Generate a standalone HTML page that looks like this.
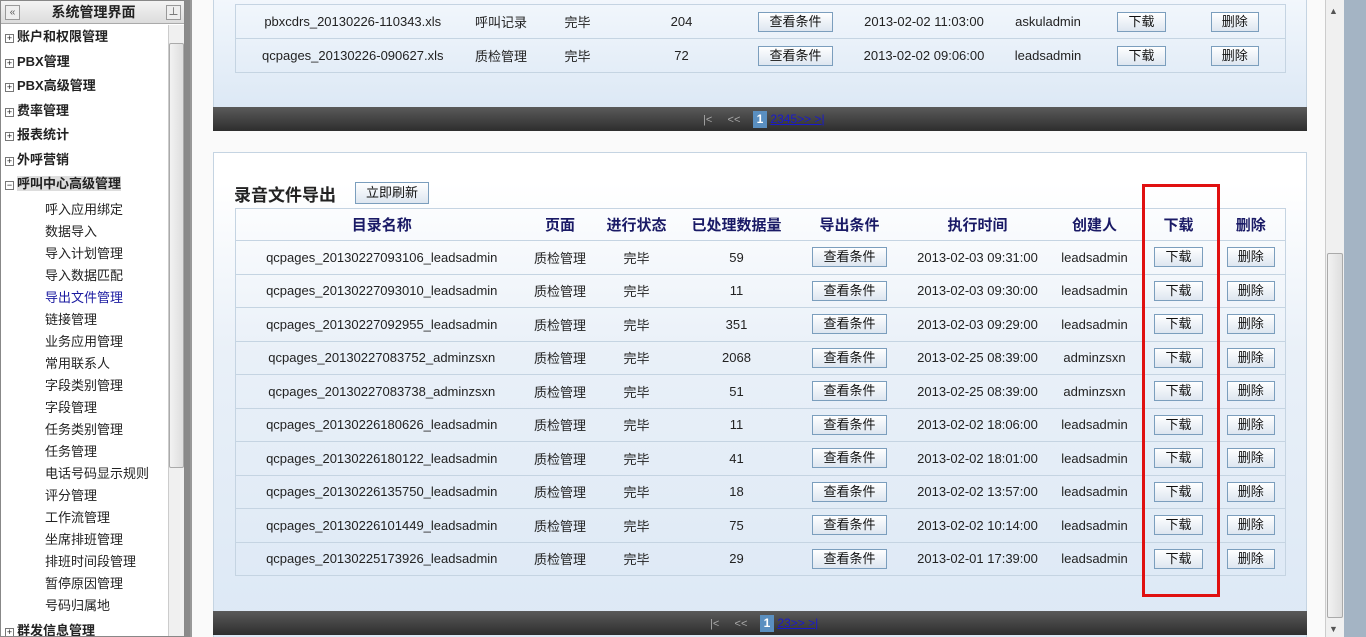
<!DOCTYPE html>
<html><head><meta charset="utf-8"><style>
*{margin:0;padding:0;box-sizing:border-box}
html,body{width:1366px;height:637px;overflow:hidden}
body{background:#8a8a8a;font-family:"Liberation Sans","Noto Sans CJK SC",sans-serif;font-size:13px;color:#222;position:relative}
.a{position:absolute}
#side{left:0;top:0;width:185px;height:637px;background:#fff;border:1px solid #888;overflow:hidden}
#shead{left:0;top:0;width:185px;height:23px;background:linear-gradient(#f4f4f4,#dcdcdc);border-bottom:1px solid #aaa;text-align:center;font-weight:bold;font-size:14px;line-height:23px}
.sbtn{top:4px;width:15px;height:15px;border:1px solid #999;background:#eee;font-size:10px;line-height:13px;text-align:center;color:#555}
.t1{left:4px;font-weight:bold;font-size:13px;line-height:18px;white-space:nowrap}
.t1 b{display:inline-block;width:9px;height:9px;border:1px solid #777;font-size:9px;line-height:7px;text-align:center;font-weight:normal;margin-right:3px;vertical-align:0px}
.t2{left:44px;font-size:13px;line-height:18px;white-space:nowrap}
.sbar{background:#f0f0f0;border-left:1px solid #ccc}
.thumb{background:linear-gradient(90deg,#f2f2f2,#dedede);border:1px solid #aaa;border-radius:2px}
#main{left:190px;top:0;width:1135px;height:637px;background:#fafafa;border-left:2px solid #999;overflow:hidden}
.panel{background:linear-gradient(#f2f7fc,#dce8f5);border:1px solid #c5d4e2}
.bar{background:linear-gradient(#5a5a5a,#2e2e2e);color:#aaa;font-size:11px}
.btn{display:inline-block;border:1px solid #7b9ebd;background:linear-gradient(#fff,#dde6f0);font-size:13px;line-height:18px;padding:0 10px;color:#111}
table{border-collapse:collapse;position:absolute;table-layout:fixed;border:1px solid #c5d4e2}
td,th{border-top:1px solid #c5d4e2;border-bottom:1px solid #c5d4e2;text-align:center;white-space:nowrap;font-size:13px;padding:0}
th{color:#1a1a66;font-size:15px;font-weight:bold}
.pg1{display:inline-block;background:#5a8fc0;color:#fff;font-weight:bold;padding:0 4px;font-size:12px;line-height:17px}
.lnk{color:#1a1acc;text-decoration:underline;font-size:12px}
</style></head><body>
<div id="side" class="a">
<div id="shead" class="a">系统管理界面</div>
<div class="a sbtn" style="left:4px">«</div>
<div class="a sbtn" style="left:165px">⊥</div>
<div class="a t1" style="top:27px"><b>+</b>账户和权限管理</div>
<div class="a t1" style="top:52px"><b>+</b>PBX管理</div>
<div class="a t1" style="top:76px"><b>+</b>PBX高级管理</div>
<div class="a t1" style="top:101px"><b>+</b>费率管理</div>
<div class="a t1" style="top:125px"><b>+</b>报表统计</div>
<div class="a t1" style="top:150px"><b>+</b>外呼营销</div>
<div class="a t1" style="top:174px"><b>−</b><span style="background:#ddd">呼叫中心高级管理</span></div>
<div class="a t2" style="top:200px">呼入应用绑定</div>
<div class="a t2" style="top:222px">数据导入</div>
<div class="a t2" style="top:244px">导入计划管理</div>
<div class="a t2" style="top:266px">导入数据匹配</div>
<div class="a t2" style="top:288px;color:#1a1aa0">导出文件管理</div>
<div class="a t2" style="top:310px">链接管理</div>
<div class="a t2" style="top:332px">业务应用管理</div>
<div class="a t2" style="top:354px">常用联系人</div>
<div class="a t2" style="top:376px">字段类别管理</div>
<div class="a t2" style="top:398px">字段管理</div>
<div class="a t2" style="top:420px">任务类别管理</div>
<div class="a t2" style="top:442px">任务管理</div>
<div class="a t2" style="top:464px">电话号码显示规则</div>
<div class="a t2" style="top:486px">评分管理</div>
<div class="a t2" style="top:508px">工作流管理</div>
<div class="a t2" style="top:530px">坐席排班管理</div>
<div class="a t2" style="top:552px">排班时间段管理</div>
<div class="a t2" style="top:574px">暂停原因管理</div>
<div class="a t2" style="top:596px">号码归属地</div>
<div class="a t1" style="top:621px"><b>+</b>群发信息管理</div>
<div class="a sbar" style="left:167px;top:24px;width:17px;height:612px"></div>
<div class="a thumb" style="left:168px;top:42px;width:15px;height:425px"></div>
</div>

<div id="main" class="a">
<div class="a panel" style="left:21px;top:-2px;width:1094px;height:112px"></div>
<table style="left:43px;top:4px;width:1050px">
<colgroup><col style="width:234px"><col style="width:63px"><col style="width:90px"><col style="width:118px"><col style="width:110px"><col style="width:147px"><col style="width:101px"><col style="width:86px"><col style="width:101px"></colgroup>
<tr style="height:34px"><td>pbxcdrs_20130226-110343.xls</td><td>呼叫记录</td><td>完毕</td><td>204</td><td><span class="btn">查看条件</span></td><td>2013-02-02 11:03:00</td><td>askuladmin</td><td><span class="btn">下载</span></td><td><span class="btn">删除</span></td></tr>
<tr style="height:34px"><td>qcpages_20130226-090627.xls</td><td>质检管理</td><td>完毕</td><td>72</td><td><span class="btn">查看条件</span></td><td>2013-02-02 09:06:00</td><td>leadsadmin</td><td><span class="btn">下载</span></td><td><span class="btn">删除</span></td></tr>
</table>
<div class="a bar" style="left:21px;top:107px;width:1094px;height:24px;line-height:24px;padding-left:490px">|&lt;&nbsp;&nbsp;&nbsp;&nbsp;&nbsp;&lt;&lt;&nbsp;&nbsp;&nbsp;&nbsp;<span class="pg1">1</span> <span class="lnk">2345&gt;&gt; &gt;|</span></div>

<div class="a panel" style="left:21px;top:152px;width:1094px;height:490px;background:linear-gradient(#fff 0,#fff 30px,#e9f0f8 200px,#dce8f5)"></div>
<div class="a" style="left:42px;top:181px;font-size:17px;font-weight:bold">录音文件导出</div>
<div class="a btn" style="left:163px;top:182px;line-height:20px">立即刷新</div>
<table style="left:43px;top:208px;width:1050px">
<colgroup><col style="width:292px"><col style="width:65px"><col style="width:88px"><col style="width:112px"><col style="width:114px"><col style="width:142px"><col style="width:92px"><col style="width:76px"><col style="width:69px"></colgroup>
<tr style="height:32px"><th>目录名称</th><th>页面</th><th>进行状态</th><th>已处理数据量</th><th>导出条件</th><th>执行时间</th><th>创建人</th><th>下载</th><th>删除</th></tr>
<tr style="height:33.5px"><td>qcpages_20130227093106_leadsadmin</td><td>质检管理</td><td>完毕</td><td>59</td><td><span class="btn">查看条件</span></td><td>2013-02-03 09:31:00</td><td>leadsadmin</td><td><span class="btn">下载</span></td><td><span class="btn">删除</span></td></tr>
<tr style="height:33.5px"><td>qcpages_20130227093010_leadsadmin</td><td>质检管理</td><td>完毕</td><td>11</td><td><span class="btn">查看条件</span></td><td>2013-02-03 09:30:00</td><td>leadsadmin</td><td><span class="btn">下载</span></td><td><span class="btn">删除</span></td></tr>
<tr style="height:33.5px"><td>qcpages_20130227092955_leadsadmin</td><td>质检管理</td><td>完毕</td><td>351</td><td><span class="btn">查看条件</span></td><td>2013-02-03 09:29:00</td><td>leadsadmin</td><td><span class="btn">下载</span></td><td><span class="btn">删除</span></td></tr>
<tr style="height:33.5px"><td>qcpages_20130227083752_adminzsxn</td><td>质检管理</td><td>完毕</td><td>2068</td><td><span class="btn">查看条件</span></td><td>2013-02-25 08:39:00</td><td>adminzsxn</td><td><span class="btn">下载</span></td><td><span class="btn">删除</span></td></tr>
<tr style="height:33.5px"><td>qcpages_20130227083738_adminzsxn</td><td>质检管理</td><td>完毕</td><td>51</td><td><span class="btn">查看条件</span></td><td>2013-02-25 08:39:00</td><td>adminzsxn</td><td><span class="btn">下载</span></td><td><span class="btn">删除</span></td></tr>
<tr style="height:33.5px"><td>qcpages_20130226180626_leadsadmin</td><td>质检管理</td><td>完毕</td><td>11</td><td><span class="btn">查看条件</span></td><td>2013-02-02 18:06:00</td><td>leadsadmin</td><td><span class="btn">下载</span></td><td><span class="btn">删除</span></td></tr>
<tr style="height:33.5px"><td>qcpages_20130226180122_leadsadmin</td><td>质检管理</td><td>完毕</td><td>41</td><td><span class="btn">查看条件</span></td><td>2013-02-02 18:01:00</td><td>leadsadmin</td><td><span class="btn">下载</span></td><td><span class="btn">删除</span></td></tr>
<tr style="height:33.5px"><td>qcpages_20130226135750_leadsadmin</td><td>质检管理</td><td>完毕</td><td>18</td><td><span class="btn">查看条件</span></td><td>2013-02-02 13:57:00</td><td>leadsadmin</td><td><span class="btn">下载</span></td><td><span class="btn">删除</span></td></tr>
<tr style="height:33.5px"><td>qcpages_20130226101449_leadsadmin</td><td>质检管理</td><td>完毕</td><td>75</td><td><span class="btn">查看条件</span></td><td>2013-02-02 10:14:00</td><td>leadsadmin</td><td><span class="btn">下载</span></td><td><span class="btn">删除</span></td></tr>
<tr style="height:33.5px"><td>qcpages_20130225173926_leadsadmin</td><td>质检管理</td><td>完毕</td><td>29</td><td><span class="btn">查看条件</span></td><td>2013-02-01 17:39:00</td><td>leadsadmin</td><td><span class="btn">下载</span></td><td><span class="btn">删除</span></td></tr>
</table>
<div class="a" style="left:950px;top:184px;width:78px;height:413px;border:3px solid #e01010"></div>
<div class="a bar" style="left:21px;top:611px;width:1094px;height:24px;line-height:24px;padding-left:497px">|&lt;&nbsp;&nbsp;&nbsp;&nbsp;&nbsp;&lt;&lt;&nbsp;&nbsp;&nbsp;&nbsp;<span class="pg1">1</span> <span class="lnk">23&gt;&gt; &gt;|</span></div>
</div>
<div class="a sbar" style="left:1325px;top:0;width:19px;height:637px"></div>
<div class="a" style="left:1329px;top:6px;font-size:9px;color:#555">▲</div>
<div class="a" style="left:1329px;top:624px;font-size:9px;color:#555">▼</div>
<div class="a thumb" style="left:1327px;top:253px;width:16px;height:365px"></div>
<div class="a" style="left:1344px;top:0;width:22px;height:637px;background:#a4b4c4"></div>
</body></html>
